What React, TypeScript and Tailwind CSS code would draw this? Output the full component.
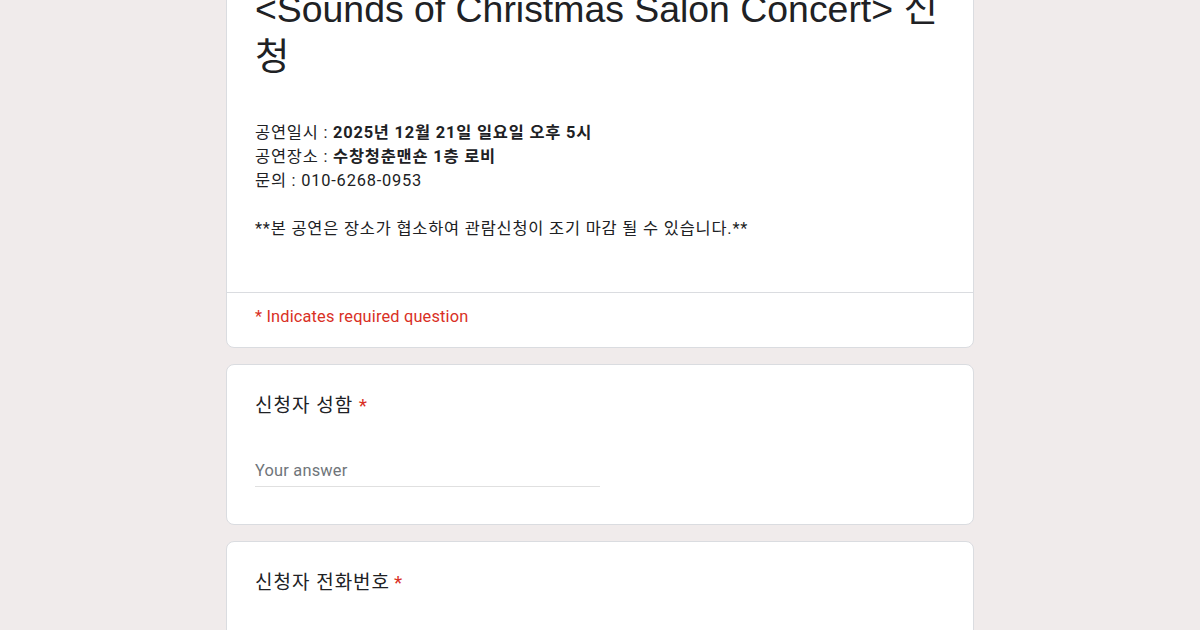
export default function App() {
  const body = "font-['Roboto','Noto_Sans_CJK_KR',sans-serif]"
  return (
    <div className={`min-h-screen bg-[#f0ebeb] flex justify-center ${body}`}>
      <div className="w-[748px] flex flex-col gap-4 mt-[-40px] pb-10">
        {/* Header card */}
        <div className="bg-white rounded-lg border border-[#dadce0]">
          <div className="px-[28px] pt-[24px] pb-[51px]">
            <h1 className="text-[37.4px] leading-[48px] text-[#202124] font-['Liberation_Sans','Noto_Sans_CJK_KR',sans-serif]">
              &lt;Sounds of Christmas Salon Concert&gt; 신청
            </h1>
            <div className="mt-[40px] text-[16.4px] leading-6 text-[#202124] tracking-[0.8px]">
              <div>
                공연일시 : <b>2025년 12월 21일 일요일 오후 5시</b>
              </div>
              <div>
                공연장소 : <b>수창청춘맨숀 1층 로비</b>
              </div>
              <div>문의 : 010-6268-0953</div>
              <div>&nbsp;</div>
              <div>**본 공연은 장소가 협소하여 관람신청이 조기 마감 될 수 있습니다.**</div>
            </div>
          </div>
          <div className="border-t border-[#dadce0] px-[28px] pt-3 pb-[17.5px] text-[16.4px] leading-6 text-[#d93025] tracking-[0.15px]">
            * Indicates required question
          </div>
        </div>

        {/* Name */}
        <div className="bg-white rounded-lg border border-[#dadce0] px-[28px] pt-[27px] pb-[37px]">
          <div className="text-[19px] leading-[27px] text-[#202124] tracking-[1px]">
            신청자 성함 <span className="text-[#d93025]">*</span>
          </div>
          <div className="mt-[40px] w-[345px] border-b border-[#e0e0e0] pb-[3px] text-[16.4px] leading-6 text-[#70757a] tracking-[0.2px]">
            Your answer
          </div>
        </div>

        {/* Phone */}
        <div className="bg-white rounded-lg border border-[#dadce0] px-[28px] pt-[27px] pb-[37px]">
          <div className="text-[19px] leading-[27px] text-[#202124] tracking-[1px]">
            신청자 전화번호<span className="ml-1 text-[#d93025]">*</span>
          </div>
          <div className="mt-[40px] w-[345px] border-b border-[#e0e0e0] pb-[3px] text-[16.4px] leading-6 text-[#70757a] tracking-[0.2px]">
            Your answer
          </div>
        </div>
      </div>
    </div>
  )
}
